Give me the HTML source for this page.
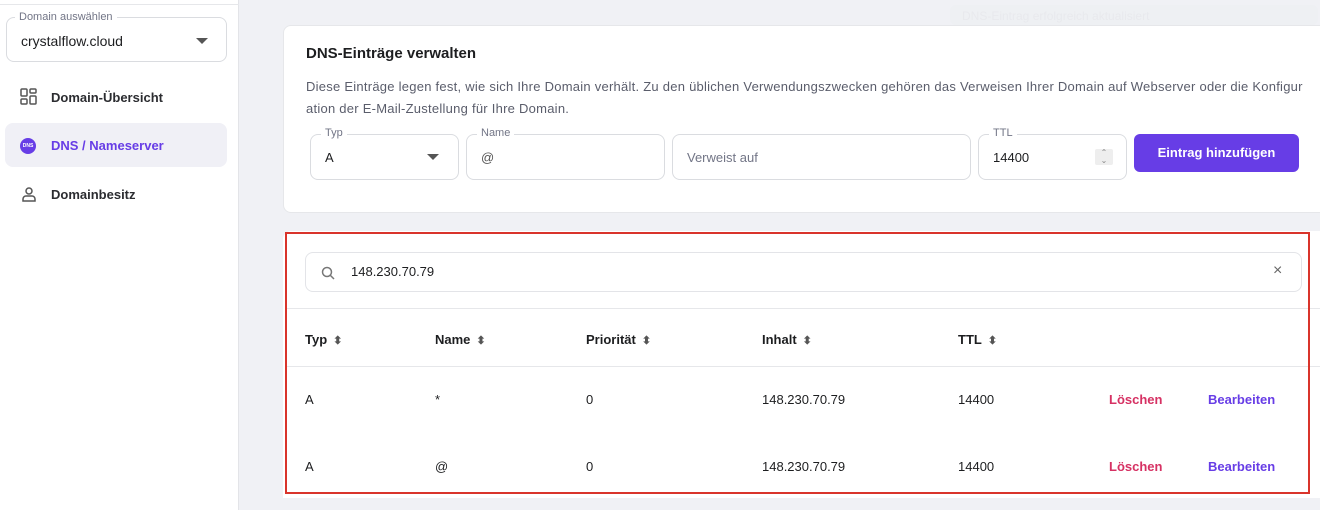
<!DOCTYPE html>
<html><head><meta charset="utf-8"><style>
*{box-sizing:border-box;margin:0;padding:0}
body{width:1320px;height:510px;overflow:hidden;background:#f0f1f5;font-family:"Liberation Sans",sans-serif;color:#1d1e20;position:relative}
.abs{position:absolute}
.side{left:0;top:0;width:239px;height:510px;background:#fff;border-right:1px solid #e3e4e8}
.fld{border:1px solid #dadce0;border-radius:8px;background:#fff}
.lbl{position:absolute;top:-8px;left:10px;background:#fff;padding:0 4px;font-size:11px;color:#727586}
.nav{position:absolute;left:5px;width:222px;height:44px;border-radius:8px;font-size:13px;font-weight:bold;display:flex;align-items:center;padding-left:46px;color:#2b2c30}
.card{background:#fff;border-radius:8px}
.th{position:absolute;top:332px;font-size:13px;font-weight:bold}
.td{position:absolute;font-size:13px;color:#1d1e20}
.sort{font-size:11px;color:#555;margin-left:6px}
</style></head><body>
<div class="abs side">
  <div class="abs" style="left:0;top:4px;width:239px;height:1px;background:#e6e7ea"></div>
  <div class="abs fld" style="left:6px;top:17px;width:221px;height:45px">
    <div class="lbl" style="left:8px;top:-7px">Domain auswählen</div>
    <div class="abs" style="left:14px;top:15px;font-size:14px">crystalflow.cloud</div>
    <div class="abs" style="left:189px;top:20px;width:0;height:0;border-left:6px solid transparent;border-right:6px solid transparent;border-top:6px solid #555"></div>
  </div>
  <div class="nav" style="top:75px">Domain-Übersicht</div>
  <svg class="abs" style="left:20px;top:88px" width="17" height="18" viewBox="0 0 17 18" fill="none" stroke="#555" stroke-width="1.5"><rect x="1" y="1" width="6" height="7" rx="1"/><rect x="10" y="1" width="6" height="4" rx="1"/><rect x="1" y="11" width="6" height="5" rx="1"/><rect x="10" y="8" width="6" height="8" rx="1"/></svg>
  <div class="nav" style="top:123px;background:#f0f0f6;color:#673de6">DNS / Nameserver</div>
  <div class="abs" style="left:20px;top:138px;width:16px;height:16px;border-radius:50%;background:#673de6;color:#fff;font-size:5px;font-weight:bold;text-align:center;line-height:16px">DNS</div>
  <div class="nav" style="top:172px">Domainbesitz</div>
  <svg class="abs" style="left:22px;top:187px" width="14" height="15" viewBox="0 0 14 15" fill="none" stroke="#555" stroke-width="1.5"><circle cx="7" cy="4" r="3"/><path d="M1 14v-2a3 3 0 0 1 3-3h6a3 3 0 0 1 3 3v2z"/></svg>
</div>
<div class="abs" style="left:950px;top:5px;width:368px;height:20px;background:#eef0f3;border-radius:6px;color:#e8e9ed;font-size:12px;padding:4px 12px">DNS-Eintrag erfolgreich aktualisiert</div>
<div class="abs card" style="left:283px;top:25px;width:1045px;height:188px;border:1px solid #e6e7ea">
  <div class="abs" style="left:22px;top:19px;font-size:15px;font-weight:bold">DNS-Einträge verwalten</div>
  <div class="abs" style="left:22px;top:50px;width:1010px;font-size:13px;line-height:22px;color:#5a5d6b;letter-spacing:0.25px;white-space:nowrap">Diese Einträge legen fest, wie sich Ihre Domain verhält. Zu den üblichen Verwendungszwecken gehören das Verweisen Ihrer Domain auf Webserver oder die Konfigur<br>ation der E-Mail-Zustellung für Ihre Domain.</div>
  <div class="abs fld" style="left:26px;top:108px;width:149px;height:46px"><div class="lbl">Typ</div><div class="abs" style="left:14px;top:15px;font-size:13px">A</div><div class="abs" style="left:116px;top:19px;border-left:6px solid transparent;border-right:6px solid transparent;border-top:6px solid #555"></div></div>
  <div class="abs fld" style="left:182px;top:108px;width:199px;height:46px"><div class="lbl">Name</div><div class="abs" style="left:14px;top:15px;font-size:13px;color:#555">@</div></div>
  <div class="abs fld" style="left:388px;top:108px;width:299px;height:46px"><div class="abs" style="left:14px;top:15px;font-size:13px;color:#727586">Verweist auf</div></div>
  <div class="abs fld" style="left:694px;top:108px;width:149px;height:46px"><div class="lbl">TTL</div><div class="abs" style="left:14px;top:15px;font-size:13px">14400</div><div class="abs" style="left:116px;top:14px;width:18px;height:16px;background:#eee;border-radius:2px;font-size:8px;color:#888;text-align:center;line-height:8px">⌃<br>⌄</div></div>
  <div class="abs" style="left:850px;top:108px;width:165px;height:38px;background:#673de6;border-radius:6px;color:#fff;font-size:13px;font-weight:bold;text-align:center;line-height:38px">Eintrag hinzufügen</div>
</div>
<div class="abs" style="left:283px;top:231px;width:1045px;height:267px;background:#fff;border-radius:8px 0 0 0"></div>
<div class="abs fld" style="left:305px;top:252px;width:997px;height:40px;border-color:#e3e4e8">
  <svg class="abs" style="left:15px;top:13px" width="14" height="14" viewBox="0 0 14 14" fill="none" stroke="#777" stroke-width="1.5"><circle cx="6" cy="6" r="4.5"/><path d="M9.5 9.5L13 13"/></svg>
  <div class="abs" style="left:45px;top:11px;font-size:13px">148.230.70.79</div>
  <div class="abs" style="left:967px;top:9px;font-size:16px;color:#666">×</div>
</div>
<div class="abs" style="left:287px;top:308px;width:1033px;height:1px;background:#e6e7ea"></div>
<div class="abs" style="left:287px;top:366px;width:1033px;height:1px;background:#e6e7ea"></div>
<div class="th" style="left:305px">Typ<span class="sort">⬍</span></div>
<div class="th" style="left:435px">Name<span class="sort">⬍</span></div>
<div class="th" style="left:586px">Priorität<span class="sort">⬍</span></div>
<div class="th" style="left:762px">Inhalt<span class="sort">⬍</span></div>
<div class="th" style="left:958px">TTL<span class="sort">⬍</span></div>
<div class="td" style="left:305px;top:392px">A</div><div class="td" style="left:435px;top:392px">*</div><div class="td" style="left:586px;top:392px">0</div><div class="td" style="left:762px;top:392px">148.230.70.79</div><div class="td" style="left:958px;top:392px">14400</div>
<div class="td" style="left:1109px;top:392px;color:#d63163;font-weight:bold">Löschen</div><div class="td" style="left:1208px;top:392px;color:#673de6;font-weight:bold">Bearbeiten</div>
<div class="td" style="left:305px;top:459px">A</div><div class="td" style="left:435px;top:459px">@</div><div class="td" style="left:586px;top:459px">0</div><div class="td" style="left:762px;top:459px">148.230.70.79</div><div class="td" style="left:958px;top:459px">14400</div>
<div class="td" style="left:1109px;top:459px;color:#d63163;font-weight:bold">Löschen</div><div class="td" style="left:1208px;top:459px;color:#673de6;font-weight:bold">Bearbeiten</div>
<div class="abs" style="left:285px;top:232px;width:1025px;height:262px;border:2px solid #d9342b"></div>
</body></html>
